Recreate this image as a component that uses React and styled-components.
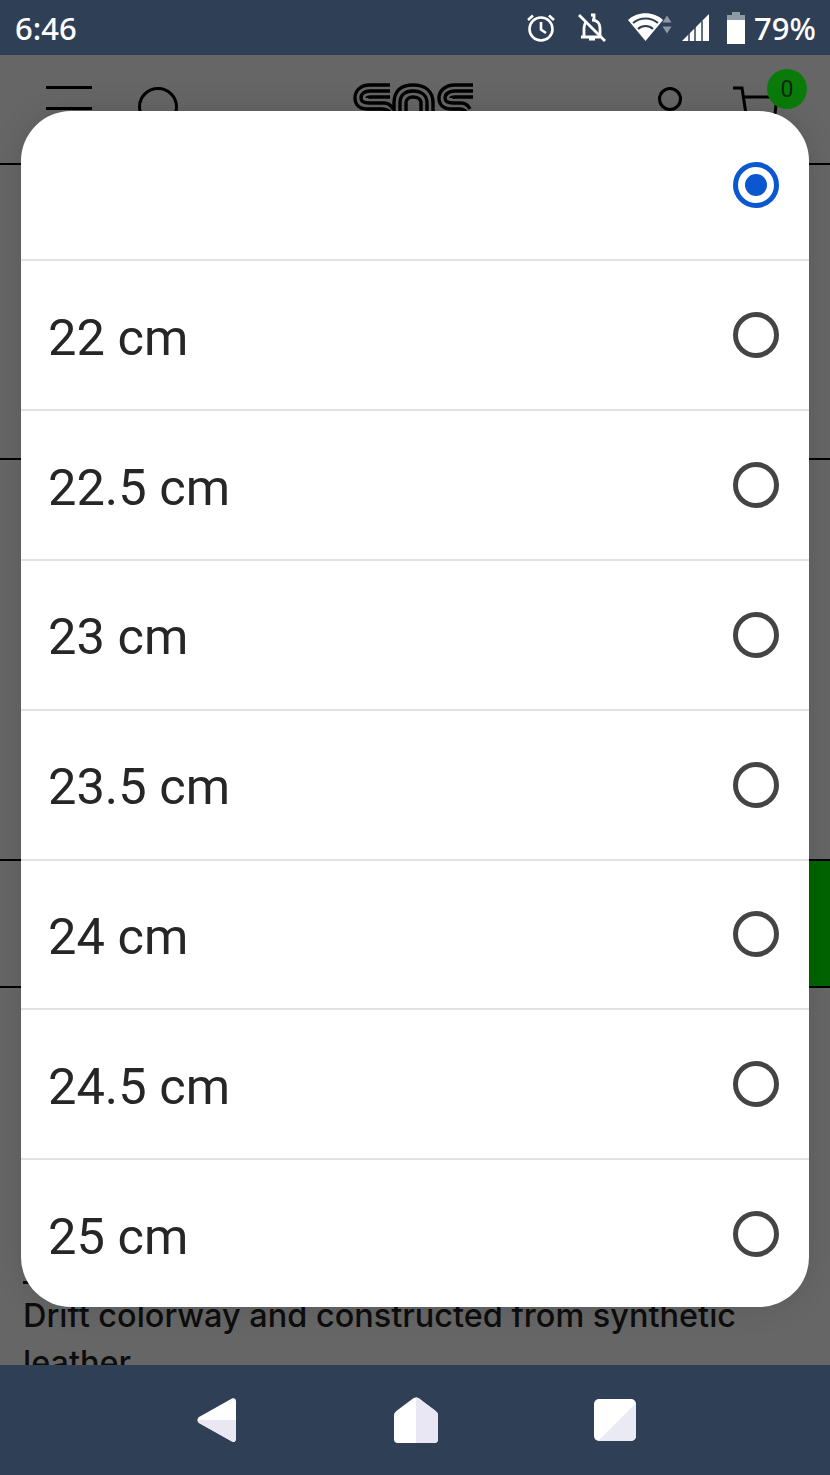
import styled, { createGlobalStyle } from 'styled-components';

const sizes = ['22 cm', '22.5 cm', '23 cm', '23.5 cm', '24 cm', '24.5 cm', '25 cm'];

const Global = createGlobalStyle`
  html, body { margin: 0; padding: 0; background: #666; }
  body { font-family: Roboto, "Liberation Sans", sans-serif; }
`;

const Screen = styled.div`
  position: relative;
  width: 830px;
  height: 1475px;
  display: flex;
  flex-direction: column;
  overflow: hidden;
  background: #2f4056;
`;

const StatusBar = styled.div`
  height: 55px;
  flex: none;
  display: flex;
  align-items: center;
  justify-content: space-between;
  padding: 0 14px 0 15px;
  background: #2f4056;
  color: #fff;
  font-family: "Noto Sans", sans-serif;
  font-weight: 500;
  font-size: 31px;
`;

const StatusIcons = styled.div`
  display: flex;
  align-items: center;
`;

const Percent = styled.span`
  margin-left: 9px;
`;

const Page = styled.div`
  position: relative;
  flex: 1;
  background: #666;
  overflow: hidden;
`;

const Header = styled.div`
  height: 110px;
  box-sizing: border-box;
  border-bottom: 2px solid #000;
  display: flex;
  align-items: flex-start;
  padding: 30px 0 0 46px;
`;

const Burger = styled.div`
  width: 46px;
  height: 24px;
  box-sizing: border-box;
  border-top: 3px solid #000;
  border-bottom: 3px solid #000;
  margin: 1px 46px 0 0;
`;

const SearchRing = styled.div`
  width: 40px;
  height: 40px;
  box-sizing: border-box;
  border: 3px solid #000;
  border-radius: 50%;
  margin-top: 2px;
`;

const Logo = styled.svg`
  margin: -2px 0 0 175px;
  flex: none;
`;

const UserHead = styled.div`
  width: 24px;
  height: 24px;
  box-sizing: border-box;
  border: 3px solid #000;
  border-radius: 50%;
  margin: 2px 0 0 183px;
`;

const Cart = styled.div`
  position: relative;
  margin-left: 51px;
  width: 46px;
`;

const CartBadge = styled.div`
  position: absolute;
  left: 34px;
  top: -16px;
  width: 40px;
  height: 40px;
  border-radius: 50%;
  background: #0a7a0a;
  color: #0b2a0b;
  display: flex;
  align-items: center;
  justify-content: center;
  font-size: 23px;
`;

const Band = styled.div`
  height: ${(p) => p.$height}px;
  border-bottom: 2px solid #000;
  box-sizing: border-box;
`;

const GreenBand = styled.div`
  height: 127px;
  border-bottom: 2px solid #000;
  box-sizing: border-box;
  display: flex;
  justify-content: flex-end;
`;

const GreenBlock = styled.div`
  width: 120px;
  background: #006400;
`;

const Copy = styled.div`
  padding: 293px 0 0 23px;
  width: 780px;
  font-family: Inter, sans-serif;
  font-weight: 500;
  font-size: 32.45px;
  line-height: 47px;
  color: #0d0d0d;
`;

const CopyRule = styled.div`
  width: 10px;
  height: 3px;
  background: #0d0d0d;
  margin-bottom: 8px;
`;

const Dialog = styled.div`
  position: absolute;
  left: 21px;
  top: 56px;
  width: 788px;
  height: 1196px;
  background: #fff;
  border-radius: 50px;
  overflow: hidden;
`;

const DialogShadow = styled.div`
  position: absolute;
  left: 21px;
  top: 56px;
  width: 788px;
  height: 1196px;
  border-radius: 50px;
  box-shadow: 0 0 30px rgba(0, 0, 0, 0.12);
`;

const Row = styled.div`
  height: ${(p) => (p.$first ? 150.4 : 149.8)}px;
  box-sizing: border-box;
  display: flex;
  align-items: center;
  justify-content: space-between;
  padding: 4px 30px 0 27px;
  border-top: ${(p) => (p.$first ? 'none' : '2px solid #e2e2e2')};
  margin-top: ${(p) => (p.$first ? '-2px' : '0')};
  font-size: 50.6px;
  color: #262626;
`;

const Radio = styled.div`
  width: 46px;
  height: 46px;
  box-sizing: border-box;
  border-radius: 50%;
  border: 5px solid ${(p) => (p.$on ? '#0b57d0' : '#444')};
  display: flex;
  align-items: center;
  justify-content: center;
  margin-top: ${(p) => (p.$on ? '-2px' : '-4px')};
  &::after {
    content: '';
    display: ${(p) => (p.$on ? 'block' : 'none')};
    width: 22px;
    height: 22px;
    border-radius: 50%;
    background: #0b57d0;
  }
`;

const NavBar = styled.div`
  height: 110px;
  flex: none;
  background: #2f4056;
  display: flex;
  align-items: center;
  justify-content: flex-start;
  gap: 156px;
  padding: 0 0 0 196px;
`;

const AlarmIcon = () => (
  <svg width="30" height="30" viewBox="0 0 30 30" fill="none" stroke="#fff" strokeWidth="2.6" style={{ marginRight: 20 }}>
    <circle cx="15" cy="16" r="11.5" />
    <path d="M15 9v7.5l5 3.5M2 7l5-4.5M28 7l-5-4.5" />
  </svg>
);

const BellOffIcon = () => (
  <svg width="32" height="32" viewBox="0 0 32 32" fill="none" stroke="#fff" strokeWidth="2.8" style={{ marginRight: 19 }}>
    <path d="M5 25h19M8 25v-9c0-2 .5-4 2-6M24 25v-9c0-5-3-8-8-8" />
    <path d="M15 3h3v4M13 27h6M3 3l26 26" />
  </svg>
);

const WifiIcon = () => (
  <svg width="52" height="32" viewBox="0 0 52 32" style={{ marginRight: 2 }}>
    <path d="M1 8C10-1 27-1 36 8L18.500 29Z" fill="#fff" />
    <path d="M6 11c7-6 18-6 25 0" stroke="#2f4056" strokeWidth="2" fill="none" />
    <path d="M11 17c4-4 11-4 15 0" stroke="#2f4056" strokeWidth="2" fill="none" />
    <path d="M40 3.500l4.500 7h-9zM40 21.500l-4.500-7h9z" fill="#8f9aa8" />
  </svg>
);

const SignalIcon = () => (
  <svg width="30" height="30" viewBox="0 0 30 30" style={{ marginRight: 16 }}>
    <path d="M1 28L28 1v27z" fill="#fff" />
    <path d="M8 29V20M14 29V14M21 29V8" stroke="#2f4056" strokeWidth="1.500" />
  </svg>
);

const BatteryIcon = () => (
  <svg width="18" height="32" viewBox="0 0 18 32">
    <path d="M5 0h8v3h5v29H0V3h5z" fill="#fff" />
    <path d="M5 0h8v3h5v5H0V3h5z" fill="#8f9aa8" />
  </svg>
);

const BackIcon = () => (
  <svg width="42" height="46" viewBox="0 0 42 46">
    <path d="M36 1.500c2-1 4 0 4 3v37c0 3-2 4-4 3L3 26c-2-1.500-2-4.500 0-6z" fill="#fff" />
    <path d="M1.500 23H40v18.500c0 3-2 4-4 3L3 26c-1-1-1.500-2-1.500-3z" fill="#e9e7f2" />
  </svg>
);

const HomeIcon = () => (
  <svg width="44" height="46" viewBox="0 0 44 46">
    <path d="M19 1.500c2-1.500 4-1.500 6 0l16 12c2 1.500 3 3 3 5v24c0 2-1.500 3.500-3.500 3.500h-37C1.500 46 0 44.500 0 42.500v-24c0-2 1-3.500 3-5z" fill="#fff" />
    <path d="M22 .4c1 0 2 .4 3 1.100l16 12c2 1.500 3 3 3 5v24c0 2-1.500 3.500-3.500 3.500H22z" fill="#e9e7f4" />
  </svg>
);

const SquareIcon = () => (
  <svg width="42" height="42" viewBox="0 0 42 42">
    <rect width="42" height="42" rx="5" fill="#fff" />
    <path d="M42 4v33a5 5 0 0 1-5 5H4z" fill="#e9eaf3" />
  </svg>
);

const CartIcon = () => (
  <svg width="46" height="44" viewBox="0 0 46 44" fill="none" stroke="#000" strokeWidth="3">
    <path d="M0 3h9l4 26M11 12h26M43 20l-1 9" />
  </svg>
);

const LogoMark = () => (
  <Logo width="122" height="32" viewBox="0 0 122 32" fill="none" stroke="#000" strokeWidth="3.4">
    <path d="M37 2H17C7 2 2 8 2 15s5 11 13 11h14c5 0 8 2 10 6" />
    <path d="M37 8H17c-6 0-9 3-9 7s3 5 8 5h15c4 0 7 2 9 6" />
    <path d="M37 14H18c-3 0-4 .5-4 1" />
    <path d="M41 32V20C41 8 48 2 60 2s20 6 20 18v12" />
    <path d="M47 32V20c0-8 5-12 13-12s14 4 14 12v12" />
    <path d="M53 32V20c0-4 3-6 7-6s8 2 8 6v12" />
    <path d="M120 2h-18c-10 0-16 6-16 13s5 11 13 11h8c4 0 6 2 8 6" />
    <path d="M120 8h-18c-6 0-10 3-10 7s3 5 8 5h8c4 0 7 2 9 6" />
    <path d="M120 14h-18c-3 0-4 .5-4 1" />
  </Logo>
);

export default function App() {
  return (
    <Screen>
      <Global />
      <StatusBar>
        <span>6:46</span>
        <StatusIcons>
          <AlarmIcon />
          <BellOffIcon />
          <WifiIcon />
          <SignalIcon />
          <BatteryIcon />
          <Percent>79%</Percent>
        </StatusIcons>
      </StatusBar>
      <Page>
        <Header>
          <Burger />
          <SearchRing />
          <LogoMark />
          <UserHead />
          <Cart>
            <CartIcon />
            <CartBadge>0</CartBadge>
          </Cart>
        </Header>
        <Band $height={295} />
        <Band $height={401} />
        <GreenBand>
          <GreenBlock />
        </GreenBand>
        <Copy>
          <CopyRule />
          Drift colorway and constructed from synthetic
          <br />
          leather
        </Copy>
        <DialogShadow />
        <Dialog>
          <Row $first>
            <span />
            <Radio $on />
          </Row>
          {sizes.map((size) => (
            <Row key={size}>
              <span>{size}</span>
              <Radio />
            </Row>
          ))}
        </Dialog>
      </Page>
      <NavBar>
        <BackIcon />
        <HomeIcon />
        <SquareIcon />
      </NavBar>
    </Screen>
  );
}
